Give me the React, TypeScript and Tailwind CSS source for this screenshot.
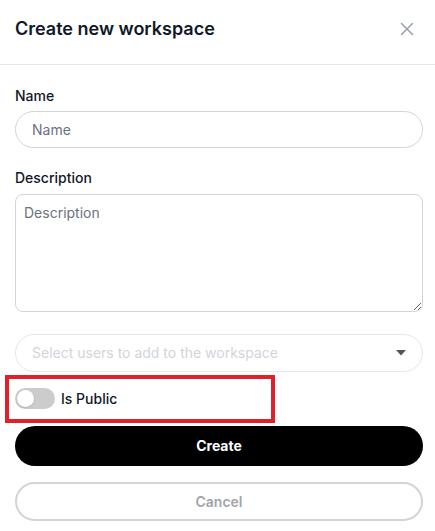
import React from "react";
import { X } from "lucide-react";

export default function App() {
  return (
    <div className="w-[435px] h-[531px] bg-white overflow-hidden font-['Inter',sans-serif] text-[#111827]">
      <div className="flex items-start justify-between h-[65px] border-b border-[#e5e7eb] pl-[15px] pr-[17px] pt-[15px]">
        <h2 className="text-[18px] leading-[28px] font-semibold text-[#111827]">Create new workspace</h2>
        <button className="mt-[3px] text-[#9ca3af]">
          <X size={22} strokeWidth={1.75} />
        </button>
      </div>
      <div className="pl-[15px] pr-[12px] pt-[21px] flex flex-col">
        <label className="text-sm leading-5 font-medium text-[#111827]">Name</label>
        <div className="mt-[5px] h-[37px] rounded-full border border-[#d4d4d8] flex items-center pl-4 text-sm text-[#6b7280]">
          Name
        </div>
        <label className="mt-[20px] text-sm leading-5 font-medium text-[#111827]">Description</label>
        <textarea
          placeholder="Description"
          className="mt-[6px] h-[118px] rounded-lg border border-[#d4d4d8] p-2 text-sm leading-5 placeholder:text-[#6b7280] outline-none"
        />
        <div className="mt-[22px] h-[38px] rounded-full border border-[#e5e7eb] flex items-center justify-between pl-4 pr-[16px] text-sm text-[#d1d5db]">
          <span>Select users to add to the workspace</span>
          <svg width="10" height="6" viewBox="0 0 10 6">
            <path d="M0 0 L10 0 L5 5.5 Z" fill="#555" />
          </svg>
        </div>
        <div className="relative mt-[16px] flex items-center gap-[6px] h-[21px]">
          <div className="relative w-[40px] h-[21px] rounded-full bg-[#cccccc]">
            <div className="absolute left-[2px] top-[2px] w-[17px] h-[17px] rounded-full bg-white shadow-sm" />
          </div>
          <span className="text-sm leading-5 font-medium text-[#111827]">Is Public</span>
          <div className="absolute left-[-10px] top-[-13px] w-[270px] h-[48px] border-4 border-[#e0202a] pointer-events-none" />
        </div>
        <button className="mt-[17px] h-[40px] rounded-full bg-black text-white text-sm font-bold">Create</button>
        <button className="mt-[16px] h-[39px] rounded-full border-2 border-[#d4d4d8] text-[#a1a5ab] text-sm font-semibold bg-white">
          Cancel
        </button>
      </div>
    </div>
  );
}
